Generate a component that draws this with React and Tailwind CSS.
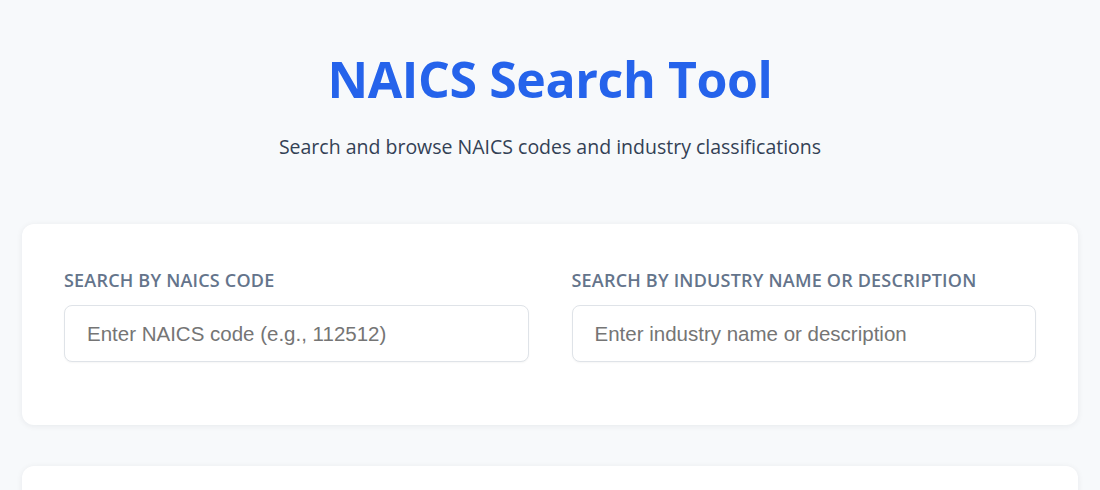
export default function App() {
  const sans = { fontFamily: '"Open Sans", "Noto Sans", sans-serif' };
  const arial = { fontFamily: '"Liberation Sans", Arial, sans-serif' };
  return (
    <div className="min-h-screen bg-[#f7f9fb] px-[22px] pt-[49px]" style={sans}>
      <header className="flex flex-col items-center">
        <h1 className="text-[50px] leading-[60px] font-bold text-[#2563eb] tracking-[-0.4px]">
          NAICS Search Tool
        </h1>
        <p className="mt-[24px] text-[19.5px] leading-[28px] text-[#334155]">
          Search and browse NAICS codes and industry classifications
        </p>
      </header>

      <section className="mt-[63px] rounded-xl bg-white px-[42px] pt-[44px] pb-[63px] shadow-[0_1px_6px_rgba(15,23,42,0.07)]">
        <div className="grid grid-cols-2 gap-[43px]">
          <div className="flex flex-col">
            <label className="text-[18px] leading-[24px] font-semibold uppercase tracking-[0.2px] text-[#64748b]">
              Search by NAICS code
            </label>
            <input
              type="text"
              placeholder="Enter NAICS code (e.g., 112512)"
              className="mt-[13px] h-[57px] rounded-lg border border-[#dfe3e8] bg-white px-[22px] text-[20.5px] text-[#334155] placeholder-[#757575] outline-none shadow-[0_1px_2px_rgba(0,0,0,0.04)]"
              style={arial}
            />
          </div>
          <div className="flex flex-col">
            <label className="text-[18px] leading-[24px] font-semibold uppercase tracking-[0.2px] text-[#64748b]">
              Search by industry name or description
            </label>
            <input
              type="text"
              placeholder="Enter industry name or description"
              className="mt-[13px] h-[57px] rounded-lg border border-[#dfe3e8] bg-white px-[22px] text-[20.5px] text-[#334155] placeholder-[#757575] outline-none shadow-[0_1px_2px_rgba(0,0,0,0.04)]"
              style={arial}
            />
          </div>
        </div>
      </section>

      <section className="mt-[41px] h-[200px] rounded-xl bg-white shadow-[0_1px_6px_rgba(15,23,42,0.07)]" />
    </div>
  );
}
